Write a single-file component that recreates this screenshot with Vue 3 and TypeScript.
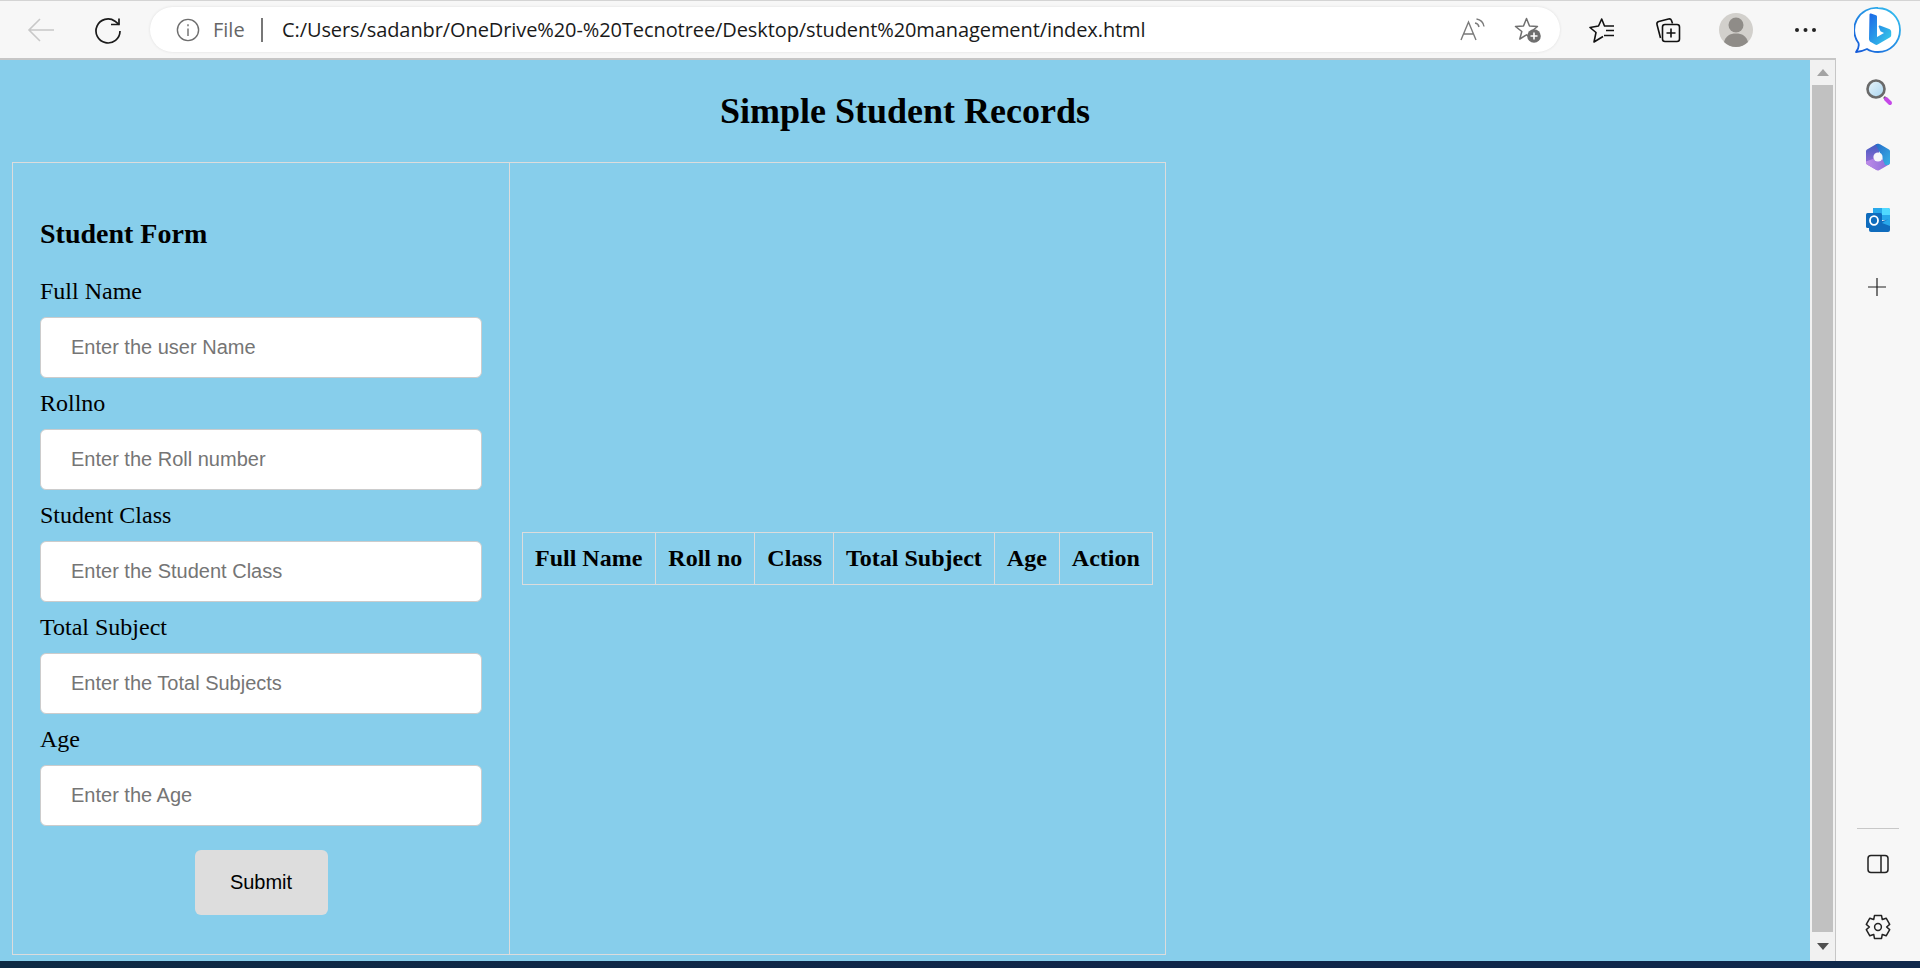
<script setup lang="ts">
const fields: { label: string; placeholder: string }[] = [
  { label: 'Full Name', placeholder: 'Enter the user Name' },
  { label: 'Rollno', placeholder: 'Enter the Roll number' },
  { label: 'Student Class', placeholder: 'Enter the Student Class' },
  { label: 'Total Subject', placeholder: 'Enter the Total Subjects' },
  { label: 'Age', placeholder: 'Enter the Age' },
]
const columns: string[] = ['Full Name', 'Roll no', 'Class', 'Total Subject', 'Age', 'Action']

function gearPoints(): string {
  const pts: string[] = []
  const teeth = 6
  for (let i = 0; i < teeth; i++) {
    const c = (i / teeth) * Math.PI * 2 - Math.PI / 2
    const a = [
      [-0.52, 8.6],
      [-0.3, 12],
      [0.3, 12],
      [0.52, 8.6],
    ]
    for (const [d, r] of a) {
      pts.push(`${(13 + Math.cos(c + d) * r).toFixed(2)},${(13 + Math.sin(c + d) * r).toFixed(2)}`)
    }
  }
  return pts.join(' ')
}
const gear = gearPoints()
</script>

<template>
  <div class="window">
    <header class="toolbar">
      <div class="nav">
        <svg class="nav-icon" width="54" height="30" viewBox="0 0 54 30" fill="none" stroke="#c8c8c8" stroke-width="1.6">
          <path d="M40 15H15M26 4 15 15l11 11" />
        </svg>
        <svg class="nav-icon" width="54" height="30" viewBox="0 0 54 30" fill="none" stroke="#1a1a1a" stroke-width="1.7">
          <path d="M39 16A12 12 0 1 1 34 6.2L38 9.5" />
          <path d="M38 3.5v6h-8" />
        </svg>
      </div>
      <div class="address">
        <svg class="info" width="24" height="24" viewBox="0 0 24 24" fill="none" stroke="#6e6e6e" stroke-width="1.4">
          <circle cx="12" cy="12" r="10.6" />
          <path d="M12 10.5V18M12 6.2v2" />
        </svg>
        <span class="scheme">File</span>
        <span class="sep"></span>
        <span class="url">C:/Users/sadanbr/OneDrive%20-%20Tecnotree/Desktop/student%20management/index.html</span>
        <svg class="read" width="26" height="24" viewBox="0 0 26 24" fill="none" stroke="#7a7a7a" stroke-width="1.4">
          <path d="M1 22 8.5 4 16 22M3.6 16h10" />
          <path d="M15 5c2.200.4 3.600 1.800 4 4M16.500 1c4 .6 6.800 3.400 7.500 7.500" />
        </svg>
        <svg class="star-add" width="28" height="28" viewBox="0 0 28 28" fill="none">
          <path d="M12.500 2.500 15.500 10l8 .5-6.200 5 2 7.500-6.800-4.200L5.800 23l2-7.500-6.300-5 8-.5z" stroke="#6f6f6f" stroke-width="1.500" stroke-linejoin="round" />
          <circle cx="20" cy="20" r="6.800" fill="#6f6f6f" />
          <path d="M20 16.500v7M16.500 20h7" stroke="#fff" stroke-width="1.600" />
        </svg>
      </div>
      <div class="tools">
        <svg class="tool fav" width="28" height="28" viewBox="0 0 28 28" fill="none" stroke="#111" stroke-width="1.600">
          <path d="M18 10h-1.500L13.700 3l-3.200 7L2 11.500l6 5L6 26l9-5.500" stroke-linejoin="round" />
          <path d="M18 10h8M18 14.500h8M16 19.500h10" />
        </svg>
        <svg class="tool coll" width="28" height="28" viewBox="0 0 28 28" fill="none" stroke="#111" stroke-width="1.600">
          <path d="M6.500 22 3 8.500a2.500 2.500 0 0 1 1.800-3L14.500 3a2.500 2.500 0 0 1 3 1.500l1 3" />
          <rect x="8.500" y="8.500" width="17" height="17" rx="2.500" />
          <path d="M17 12.500v9M12.500 17h9" />
        </svg>
        <svg class="tool avatar" width="36" height="36" viewBox="0 0 36 36">
          <circle cx="18" cy="18" r="17" fill="#d2d0cc" />
          <circle cx="18" cy="13" r="7.500" fill="#8f8c88" />
          <path d="M6 30c1.500-6 6-8.500 12-8.500S28.500 24 30 30a17 17 0 0 1-24 0z" fill="#8f8c88" />
        </svg>
        <svg class="tool dots" width="24" height="8" viewBox="0 0 24 8" fill="#222">
          <circle cx="4" cy="4" r="2" />
          <circle cx="12.500" cy="4" r="2" />
          <circle cx="21" cy="4" r="2" />
        </svg>
        <svg class="tool bing" width="48" height="48" viewBox="0 0 48 48" fill="none">
          <defs>
            <linearGradient id="bubble" x1="0" y1="1" x2="1" y2="0">
              <stop offset="0" stop-color="#1457d8" />
              <stop offset="1" stop-color="#35c4f0" />
            </linearGradient>
            <linearGradient id="bee" x1="0" y1="0" x2="1" y2="1">
              <stop offset="0" stop-color="#1b66e8" />
              <stop offset="1" stop-color="#38d0e8" />
            </linearGradient>
          </defs>
          <path d="M24 2a22 22 0 0 1 0 44c-4 0-8-1-11-3-3 1.500-7 2.800-11 3 2.500-3 3.200-6 2.500-9A22 22 0 0 1 24 2z" fill="#fff" stroke="url(#bubble)" stroke-width="1.800" stroke-linejoin="round" />
          <path d="M15.500 8.500c0-.8.8-1.300 1.500-1l5 1.800c.7.300 1 .8 1 1.500V31l7-4-3.500-1.700-1.800-4.500c-.3-.8.4-1.500 1.200-1.200l9.300 3.400c1.300.5 2 1.500 2 3v3c0 1-.5 2-1.500 2.600l-12 7c-.8.5-1.800.5-2.600 0l-4.300-2.600c-1.300-.8-1.800-2-1.800-3.300z" fill="url(#bee)" />
        </svg>
      </div>
    </header>

    <div class="body">
      <main class="page">
        <h1 class="title">Simple Student Records</h1>
        <div class="records">
          <form class="student-form" @submit.prevent>
            <h2 class="form-title">Student Form</h2>
            <div v-for="field in fields" :key="field.label" class="field">
              <label class="field-label">{{ field.label }}</label>
              <input class="field-input" type="text" :placeholder="field.placeholder" />
            </div>
            <button class="submit" type="submit">Submit</button>
          </form>
          <div class="table-cell">
            <table class="student-table">
              <thead>
                <tr>
                  <th v-for="col in columns" :key="col">{{ col }}</th>
                </tr>
              </thead>
            </table>
          </div>
        </div>
      </main>

      <div class="scrollbar">
        <button class="arrow" type="button"><span class="tri up"></span></button>
        <div class="thumb"></div>
        <button class="arrow down-btn" type="button"><span class="tri down"></span></button>
      </div>

      <aside class="side">
        <svg class="s-search" width="34" height="34" viewBox="0 0 34 34" fill="none">
          <defs>
            <linearGradient id="lens" x1="0" y1="0" x2="1" y2="1">
              <stop offset="0" stop-color="#e9f5fb" />
              <stop offset="1" stop-color="#a8d4ef" />
            </linearGradient>
          </defs>
          <circle cx="13" cy="13" r="8.500" fill="url(#lens)" stroke="#6a6a6a" stroke-width="2.600" />
          <path d="M21 21l2 2" stroke="#5b5b5b" stroke-width="2.500" />
          <path d="M23 23l4 4" stroke="#c548e8" stroke-width="4" stroke-linecap="round" />
        </svg>
        <svg class="s-m365" width="26" height="28" viewBox="0 0 26 28">
          <defs>
            <clipPath id="hex">
              <path d="M11 1.200c1.300-.7 2.700-.7 4 0l9 5.300c.7.400 1 1.100 1 1.800v11.400c0 .7-.3 1.400-1 1.800l-9 5.300c-1.300.7-2.700.7-4 0l-9-5.300c-.7-.4-1-1.100-1-1.800V8.300c0-.7.3-1.400 1-1.800z" />
            </clipPath>
            <linearGradient id="m1" x1="0" y1="0" x2="0" y2="1">
              <stop offset="0" stop-color="#3f5cc0" />
              <stop offset="1" stop-color="#b070dc" />
            </linearGradient>
            <linearGradient id="m2" x1="0" y1="0" x2="1" y2="1">
              <stop offset="0" stop-color="#2468c8" />
              <stop offset="1" stop-color="#38b4e6" />
            </linearGradient>
            <linearGradient id="m3" x1="0" y1="0" x2="1" y2="0">
              <stop offset="0" stop-color="#c08ee8" />
              <stop offset="1" stop-color="#8668d8" />
            </linearGradient>
          </defs>
          <g clip-path="url(#hex)">
            <rect x="0" y="0" width="14" height="28" fill="url(#m1)" />
            <polygon points="0,19 13,14 26,21 26,28 0,28" fill="url(#m3)" />
            <polygon points="10,0 26,0 26,22 20,22 16,12" fill="url(#m2)" />
          </g>
          <circle cx="13" cy="14" r="4.600" fill="#f5f6fa" />
        </svg>
        <svg class="s-outlook" width="24" height="24" viewBox="0 0 24 24">
          <path d="M7 0h15a2 2 0 0 1 2 2v10H7z" fill="#28a8ea" />
          <path d="M16 0h6a2 2 0 0 1 2 2v5h-8z" fill="#50d9ff" />
          <path d="M24 11v11a2 2 0 0 1-2 2H5a2 2 0 0 1-2-2V17l13-4z" fill="#0f6cbd" />
          <path d="M16 15l8-5v8z" fill="#28a8ea" />
          <rect x="0" y="5" width="16" height="15" rx="1.500" fill="#0f6cbd" />
          <ellipse cx="8" cy="12.500" rx="4" ry="4.300" fill="none" stroke="#fff" stroke-width="1.800" />
        </svg>
        <svg class="s-plus" width="20" height="20" viewBox="0 0 20 20" stroke="#222" stroke-width="1.200">
          <path d="M10 1v18M1 10h18" />
        </svg>
        <div class="side-rule"></div>
        <svg class="s-panel" width="22" height="20" viewBox="0 0 22 20" fill="none" stroke="#222" stroke-width="1.500">
          <rect x="1" y="1.500" width="20" height="17" rx="3" />
          <path d="M14 1.500v17" />
        </svg>
        <svg class="s-gear" width="26" height="26" viewBox="0 0 26 26" fill="none" stroke="#222" stroke-width="1.500">
          <polygon :points="gear" stroke-linejoin="round" />
          <circle cx="13" cy="13" r="3.400" />
        </svg>
      </aside>
    </div>
    <div class="taskbar-edge"></div>
  </div>
</template>

<style>
html,
body {
  margin: 0;
  padding: 0;
  overflow: hidden;
}
</style>

<style scoped>
.window {
  width: 1920px;
  height: 968px;
  display: flex;
  flex-direction: column;
  background: #f7f7f7;
  overflow: hidden;
}

.toolbar {
  box-sizing: border-box;
  height: 58px;
  border-top: 1px solid #d4d4d4;
  display: flex;
  align-items: flex-start;
  flex: none;
}

.nav {
  width: 150px;
  height: 45px;
  margin-top: 6px;
  display: flex;
  align-items: center;
  padding-left: 14px;
  box-sizing: border-box;
  gap: 13px;
  flex: none;
}

.nav-icon {
  flex: none;
}

.address {
  box-sizing: border-box;
  width: 1410px;
  height: 45px;
  margin-top: 6px;
  flex: none;
  background: #fff;
  border-radius: 23px;
  box-shadow: 0 0 3px rgba(0, 0, 0, 0.1);
  display: flex;
  align-items: center;
  padding-left: 26px;
  font-family: "Open Sans", "Liberation Sans", sans-serif;
}

.info {
  flex: none;
}

.scheme {
  margin-left: 13px;
  font-size: 20px;
  color: #666;
  width: 35px;
}

.sep {
  width: 2px;
  height: 24px;
  background: #777;
  margin-left: 13px;
}

.url {
  margin-left: 19px;
  font-size: 20px;
  color: #1a1a1a;
  white-space: nowrap;
  width: 1178px;
  flex: none;
  letter-spacing: -0.09px;
}

.read {
  flex: none;
}

.star-add {
  flex: none;
  margin-left: 28px;
}

.tools {
  display: flex;
  align-items: center;
  height: 48px;
  margin-top: 5px;
  flex: 1;
}

.tool {
  flex: none;
}

.fav {
  margin-left: 28px;
}

.coll {
  margin-left: 38px;
}

.avatar {
  margin-left: 36px;
}

.dots {
  margin-left: 39px;
}

.bing {
  margin-left: 37px;
}

.body {
  flex: 1;
  min-height: 0;
  display: flex;
}

.page {
  box-sizing: border-box;
  width: 1810px;
  background: #87ceeb;
  border-top: 2px solid #c6c6c6;
  flex: none;
  padding: 31px 0 0 12px;
}

.title {
  margin: 0 0 30px -12px;
  text-align: center;
  font-family: "Liberation Serif", serif;
  font-size: 36px;
  line-height: 41px;
  font-weight: 700;
  color: #000;
}

.records {
  display: flex;
  width: max-content;
  border: 1px solid #dcdcdc;
  font-family: "Liberation Serif", serif;
  color: #000;
}

.student-form {
  box-sizing: border-box;
  width: 497px;
  border-right: 1px solid #dcdcdc;
  padding: 55px 27px 39px;
  display: flex;
  flex-direction: column;
}

.form-title {
  margin: 0 0 28px;
  font-size: 28px;
  line-height: 32px;
  font-weight: 700;
}

.field {
  display: flex;
  flex-direction: column;
}

.field-label {
  font-size: 24px;
  line-height: 27px;
}

.field-input {
  box-sizing: border-box;
  width: 100%;
  height: 61px;
  margin: 12px 0;
  padding: 0 30px;
  border: 1px solid #ccc;
  border-radius: 6px;
  background: #fff;
  font-family: "Liberation Sans", Arial, sans-serif;
  font-size: 20px;
  outline: none;
}

.field-input::placeholder {
  color: #757575;
  opacity: 1;
}

.submit {
  align-self: center;
  width: 133px;
  height: 65px;
  margin-top: 12px;
  border: none;
  border-radius: 6px;
  background: #ddd;
  color: #000;
  font-family: "Liberation Sans", Arial, sans-serif;
  font-size: 20px;
}

.table-cell {
  padding: 0 12px;
  display: flex;
  align-items: center;
}

.student-table {
  border-collapse: collapse;
}

.student-table th {
  border: 1px solid #dcdcdc;
  padding: 12px;
  font-size: 24px;
  line-height: 27px;
  font-weight: 700;
  text-align: center;
  white-space: nowrap;
}

.student-table th:first-child {
  padding-right: 13px;
}

.student-table th:nth-child(3) {
  padding-right: 11px;
}

.scrollbar {
  box-sizing: border-box;
  width: 26px;
  flex: none;
  border-top: 2px solid #c6c6c6;
  border-right: 1px solid #c6c6c6;
  background: #f1f1f1;
  display: flex;
  flex-direction: column;
  align-items: center;
}

.arrow {
  width: 100%;
  height: 25px;
  flex: none;
  padding: 0;
  border: none;
  background: transparent;
  display: flex;
  align-items: center;
  justify-content: center;
}

.down-btn {
  height: 29px;
}

.tri {
  width: 0;
  height: 0;
  border-left: 6px solid transparent;
  border-right: 6px solid transparent;
}

.tri.up {
  border-bottom: 7px solid #a3a3a3;
}

.tri.down {
  border-top: 7px solid #505050;
}

.thumb {
  width: 21px;
  flex: 1;
  background: #c1c1c1;
}

.side {
  flex: 1;
  display: flex;
  flex-direction: column;
  align-items: center;
}

.s-search {
  margin-top: 18px;
  margin-left: 4px;
  flex: none;
}

.s-m365 {
  margin-top: 33px;
  flex: none;
}

.s-outlook {
  margin-top: 37px;
  flex: none;
}

.s-plus {
  margin-top: 45px;
  margin-right: 2px;
  flex: none;
}

.side-rule {
  margin-top: auto;
  width: 42px;
  height: 1px;
  background: #c8c8c8;
  flex: none;
}

.s-panel {
  margin-top: 25px;
  flex: none;
}

.s-gear {
  margin-top: 40px;
  margin-bottom: 21px;
  margin-right: 1px;
  flex: none;
}

.taskbar-edge {
  height: 7px;
  flex: none;
  background: linear-gradient(90deg, #0e2a44, #10264a 60%, #10294c);
}
</style>
